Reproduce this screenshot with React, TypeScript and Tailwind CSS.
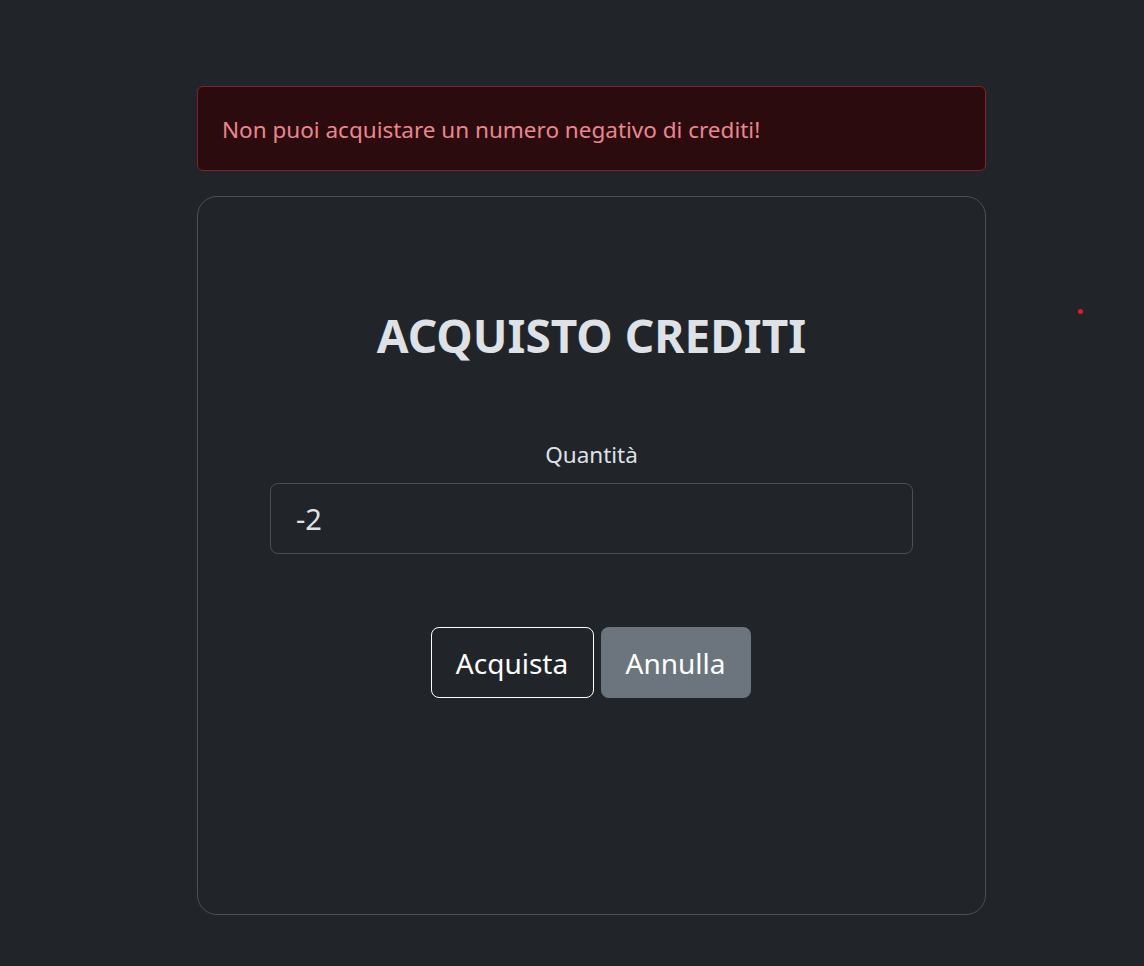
import React from "react";

export default function App() {
  return (
    <div className="min-h-[966px] w-full bg-[#212529] text-[#dee2e6] relative" style={{ fontFamily: '"Noto Sans", "Open Sans", sans-serif' }}>
      <div className="absolute left-[1078px] top-[309px] h-[5px] w-[5px] rounded-full bg-[#e01b24]" />
      <div className="flex flex-col items-start pt-[86px] pl-[197px]">
        <div className="w-[789px] h-[85px] flex items-center px-[24px] pt-[3px] rounded-[6px] border border-[#842029] bg-[#2c0b0e] text-[#ea868f] text-[22.5px] leading-[30px]">
          Non puoi acquistare un numero negativo di crediti!
        </div>
        <div className="mt-[25px] w-[789px] h-[719px] rounded-[20px] border border-[#495057] flex flex-col items-center">
          <h1 className="mt-[111px] text-[46px] font-bold leading-[1.2] text-[#dee2e6]">ACQUISTO CREDITI</h1>
          <label className="mt-[77px] text-[22.5px] leading-[30px]">Quantità</label>
          <div className="mt-[13px] w-[643px] h-[71px] rounded-[8px] border border-[#495057] flex items-center px-[25px] text-[29px] text-[#dee2e6]">-2</div>
          <div className="mt-[73px] flex gap-[7px] pr-[2px]">
            <button className="h-[71px] w-[163px] rounded-[8px] border border-white text-white text-[28px]">Acquista</button>
            <button className="h-[71px] w-[150px] rounded-[8px] bg-[#6c757d] text-white text-[28px]">Annulla</button>
          </div>
        </div>
      </div>
    </div>
  );
}
